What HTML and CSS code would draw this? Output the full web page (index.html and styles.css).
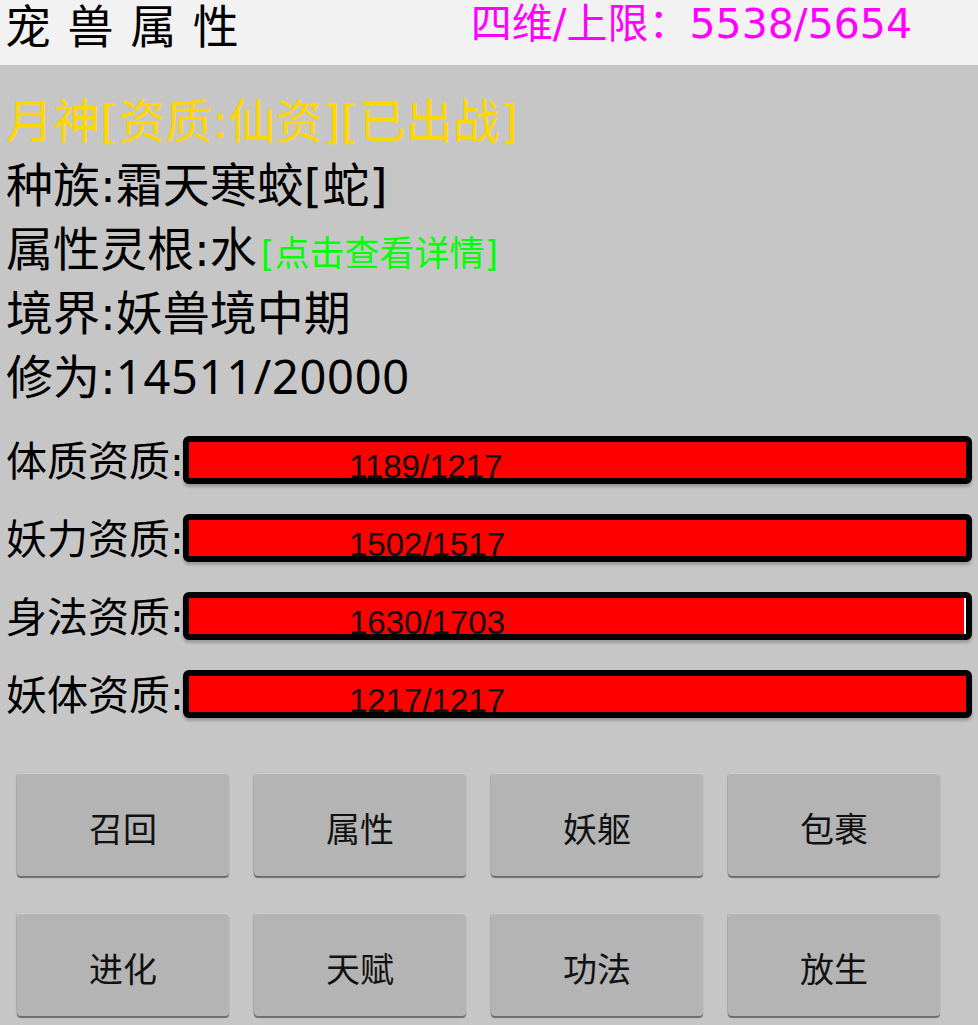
FILE: index.html
```html
<!DOCTYPE html>
<html lang="zh-CN">
<head>
<meta charset="utf-8">
<title>宠兽属性</title>
<link rel="stylesheet" href="styles.css">
</head>
<body>
<header class="topbar">
  <div class="title">宠 兽 属 性</div>
  <div class="limit">四维/上限：5538/5654</div>
</header>
<main class="page">
  <section class="info">
    <div class="line gold">月神[资质:仙资][已出战]</div>
    <div class="line">种族:霜天寒蛟[蛇]</div>
    <div class="line">属性灵根:水<span class="link">[点击查看详情]</span></div>
    <div class="line">境界:妖兽境中期</div>
    <div class="line">修为:<span class="num">14511/20000</span></div>
  </section>
  <section class="stats">
    <div class="stat">
      <div class="stat-label">体质资质:</div>
      <div class="bar"><div class="bar-fill" style="width:100%"></div><div class="bar-text">1189/1217</div></div>
    </div>
    <div class="stat">
      <div class="stat-label">妖力资质:</div>
      <div class="bar"><div class="bar-fill" style="width:100%"></div><div class="bar-text">1502/1517</div></div>
    </div>
    <div class="stat">
      <div class="stat-label">身法资质:</div>
      <div class="bar"><div class="bar-fill" style="width:99.7%"></div><div class="bar-text">1630/1703</div></div>
    </div>
    <div class="stat">
      <div class="stat-label">妖体资质:</div>
      <div class="bar"><div class="bar-fill" style="width:100%"></div><div class="bar-text">1217/1217</div></div>
    </div>
  </section>
  <section class="actions">
    <div class="btn">召回</div>
    <div class="btn">属性</div>
    <div class="btn">妖躯</div>
    <div class="btn">包裹</div>
    <div class="btn">进化</div>
    <div class="btn">天赋</div>
    <div class="btn">功法</div>
    <div class="btn">放生</div>
  </section>
</main>
</body>
</html>
```
FILE: styles.css
```css
html, body {
  margin: 0;
  padding: 0;
}
body {
  background: #c6c6c6;
  font-family: "DejaVu Sans", "Noto Sans CJK SC", sans-serif;
  color: #000;
  width: 978px;
  height: 1025px;
  overflow: hidden;
}
.topbar {
  height: 65px;
  background: #f2f2f2;
  display: flex;
  align-items: flex-start;
  padding-left: 5px;
  box-sizing: border-box;
}
.title {
  font-size: 46px;
  line-height: 54px;
  word-spacing: 2px;
  margin-top: 0;
  white-space: pre;
}
.limit {
  margin-left: auto;
  margin-right: 66px;
  font-size: 41px;
  line-height: 48px;
  margin-top: 0;
  color: #ff00ff;
}
.page {
  padding-top: 25px;
}
.info {
  padding-left: 6px;
}
.line {
  font-size: 47px;
  line-height: 64px;
  height: 64px;
  white-space: nowrap;
}
.gold {
  color: #ffd700;
}
.link {
  font-size: 35px;
  line-height: 1;
  color: #00ff00;
  margin-left: 4px;
}
.num {
  font-family: "Noto Sans", sans-serif;
  line-height: 1;
  letter-spacing: 0.7px;
}
.stats {
  margin-top: 26px;
  display: flex;
  flex-direction: column;
  gap: 30px;
}
.stat {
  display: flex;
  align-items: center;
  height: 48px;
  padding-left: 6px;
  padding-right: 6px;
}
.stat-label {
  width: 177px;
  font-size: 41px;
  line-height: 48px;
  white-space: nowrap;
  margin-top: 3px;
}
.bar {
  flex: 1;
  height: 36px;
  border: 6px solid #000;
  border-radius: 6px;
  background: #fff;
  position: relative;
  overflow: hidden;
  box-shadow: 0 3px 3px rgba(0, 0, 0, 0.22);
}
.bar-fill {
  height: 100%;
  background: #ff0000;
}
.bar-text {
  position: absolute;
  left: 160px;
  top: 8px;
  font-family: "Liberation Sans", sans-serif;
  font-size: 33px;
  line-height: 33px;
  color: #111;
  white-space: nowrap;
}
.actions {
  margin-top: 55px;
  padding-left: 17px;
  display: grid;
  grid-template-columns: repeat(4, 212px);
  column-gap: 25px;
  row-gap: 37px;
}
.btn {
  height: 103px;
  background: #b4b4b4;
  border-radius: 4px;
  box-shadow: 0 2px 1px rgba(0, 0, 0, 0.45), inset 0 1px 0 rgba(255, 255, 255, 0.35), -1px 0 1px rgba(0, 0, 0, 0.12);
  display: flex;
  align-items: center;
  justify-content: center;
  font-size: 34px;
  padding-top: 5px;
  box-sizing: border-box;
  color: #111;
}
```
